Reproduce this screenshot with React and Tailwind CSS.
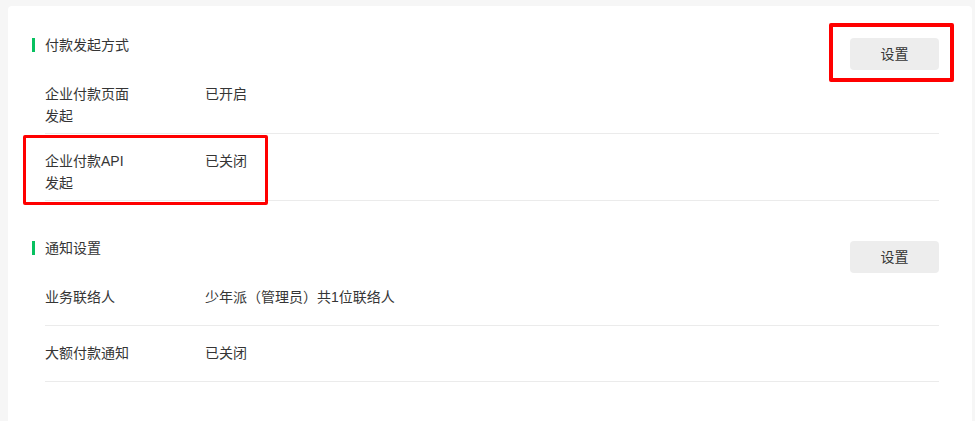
const sections = [
  {
    title: "付款发起方式",
    rows: [
      { label: "企业付款页面发起", value: "已开启" },
      { label: "企业付款API发起", value: "已关闭" },
    ],
  },
  {
    title: "通知设置",
    rows: [
      { label: "业务联络人", value: "少年派（管理员）共1位联络人" },
      { label: "大额付款通知", value: "已关闭" },
    ],
  },
];

function Section({ section, first }) {
  return (
    <section className={first ? "" : "mt-[36px]"}>
      {/* 标题 */}
      <div className="flex items-start justify-between">
        <div className="flex items-center h-[22px]">
          <span className="w-[3px] h-[14px] bg-[#07c160]" />
          <h2 className="ml-[10px] text-[14px] leading-[22px] text-[#353535] font-normal">
            {section.title}
          </h2>
        </div>
        <button className="mt-[4px] w-[89px] h-[32px] rounded-[4px] bg-[#ededed] text-[14px] text-[#353535]">
          设置
        </button>
      </div>

      {/* 列表 */}
      <div className="ml-[13px]">
        {section.rows.map((row, i) => (
          <div
            key={row.label}
            className={`flex border-b border-[#ebebeb] pb-[6px] ${i === 0 ? "pt-[13px]" : "pt-[16px]"}`}
          >
            <div className="w-[160px] shrink-0 min-h-[33px]">
              <p className="max-w-[86px] text-[14px] leading-[22px] text-[#353535]">{row.label}</p>
            </div>
            <p className="text-[14px] leading-[22px] text-[#353535]">{row.value}</p>
          </div>
        ))}
      </div>
    </section>
  );
}

export default function App() {
  return (
    <div
      className="relative h-[421px] overflow-hidden bg-[#f6f6f6] pt-[6px] pl-[8px] pr-[3px]"
      style={{ fontFamily: '"Liberation Sans", "Noto Sans CJK SC", sans-serif' }}
    >
      <div className="h-[500px] bg-white rounded-[4px] pt-[28px] pl-[24px] pr-[33px]">
        {sections.map((s, i) => (
          <Section key={s.title} section={s} first={i === 0} />
        ))}
      </div>

      {/* 标注框 */}
      <div className="absolute left-[829px] top-[23px] w-[125px] h-[59px] border-4 border-[#ff0000] rounded-[2px]" />
      <div className="absolute left-[23px] top-[135px] w-[245px] h-[70px] border-[3px] border-[#ff0000] rounded-[2px]" />
    </div>
  );
}
